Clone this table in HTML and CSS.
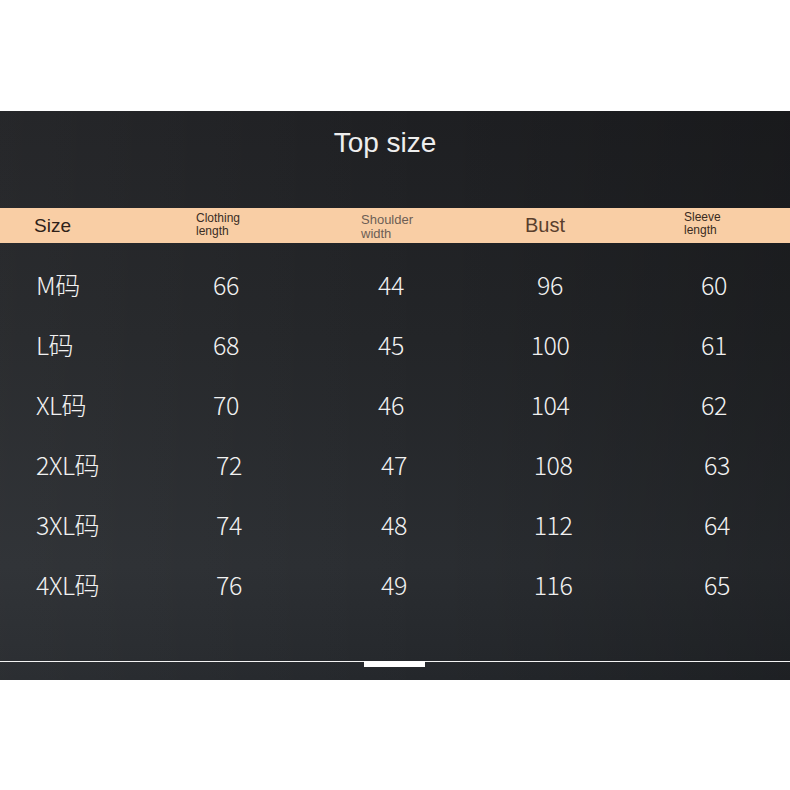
FILE: index.html
```html
<!DOCTYPE html>
<html lang="en">
<head>
<meta charset="utf-8">
<title>Top size</title>
<link rel="stylesheet" href="styles.css">
</head>
<body>
<section class="panel">
  <h1 class="title">Top size</h1>
  <div class="head">
    <div class="h h-size">Size</div>
    <div class="h h-small h-cloth">Clothing<br>length</div>
    <div class="h h-small h-shoulder">Shoulder<br>width</div>
    <div class="h h-bust">Bust</div>
    <div class="h h-small h-sleeve">Sleeve<br>length</div>
  </div>
  <div class="rows">
    <div class="row"><span class="c c-size">M码</span><span class="c">66</span><span class="c">44</span><span class="c">96</span><span class="c">60</span></div>
    <div class="row"><span class="c c-size">L码</span><span class="c">68</span><span class="c">45</span><span class="c">100</span><span class="c">61</span></div>
    <div class="row"><span class="c c-size">XL码</span><span class="c">70</span><span class="c">46</span><span class="c">104</span><span class="c">62</span></div>
    <div class="row shift"><span class="c c-size">2XL码</span><span class="c">72</span><span class="c">47</span><span class="c">108</span><span class="c">63</span></div>
    <div class="row shift"><span class="c c-size">3XL码</span><span class="c">74</span><span class="c">48</span><span class="c">112</span><span class="c">64</span></div>
    <div class="row shift"><span class="c c-size">4XL码</span><span class="c">76</span><span class="c">49</span><span class="c">116</span><span class="c">65</span></div>
  </div>
  <div class="rule"><span class="rule-mark"></span></div>
</section>
</body>
</html>
```

FILE: styles.css
```css
html, body {
  margin: 0;
  padding: 0;
  background: #ffffff;
}

body {
  padding-top: 111px;
  height: 790px;
  box-sizing: border-box;
}

.panel {
  height: 569px;
  box-sizing: border-box;
  padding-top: 18px;
  background:
    linear-gradient(to right, rgba(255,255,255,0.035), rgba(255,255,255,0) 55%, rgba(0,0,0,0.18)),
    linear-gradient(to bottom, #1e1f22 0%, #232528 40%, #2a2d31 80%, #24272b 100%);
  display: flex;
  flex-direction: column;
}

.title {
  margin: 0;
  font-family: "Liberation Sans", Arial, sans-serif;
  font-weight: 400;
  font-size: 28px;
  line-height: 28px;
  color: #eeeeee;
  text-align: center;
  padding-right: 20px;
}

.head {
  margin-top: 51px;
  height: 35px;
  background: #f9cea5;
  display: grid;
  grid-template-columns: 132px 188px 142px 176px 152px;
  align-items: center;
  font-family: "Liberation Sans", Arial, sans-serif;
}

.h {
  white-space: nowrap;
}

.h-size {
  padding-left: 34px;
  font-size: 19px;
  color: #2e2119;
}

.h-small {
  font-size: 12px;
  line-height: 13px;
}

.h-cloth {
  padding-left: 64px;
  color: #3a2d24;
  margin-top: -2px;
}

.h-shoulder {
  padding-left: 41px;
  color: #6d5e55;
  font-size: 13px;
  line-height: 14px;
  margin-top: 2px;
}

.h-bust {
  padding-left: 63px;
  font-size: 20px;
  color: #5a3f2d;
}

.h-sleeve {
  padding-left: 46px;
  color: #3a2b21;
  margin-top: -4px;
}

.rows {
  padding-top: 11px;
  display: flex;
  flex-direction: column;
}

.row {
  height: 60px;
  display: grid;
  grid-template-columns: 132px 188px 142px 176px 152px;
  align-items: center;
  font-family: "Noto Sans CJK SC", "Noto Sans", sans-serif;
  font-weight: 300;
  font-size: 25px;
  color: #f1f1f1;
}

.c {
  text-align: center;
  letter-spacing: -0.5px;
}

.c-size {
  text-align: left;
  padding-left: 36px;
}

.shift .c:not(.c-size) {
  padding-left: 6px;
}

.rule {
  margin-top: 47px;
  height: 1px;
  background: #f4f4f4;
  position: relative;
}

.rule-mark {
  position: absolute;
  left: 364px;
  top: 0;
  width: 61px;
  height: 6px;
  background: #ffffff;
}
```
